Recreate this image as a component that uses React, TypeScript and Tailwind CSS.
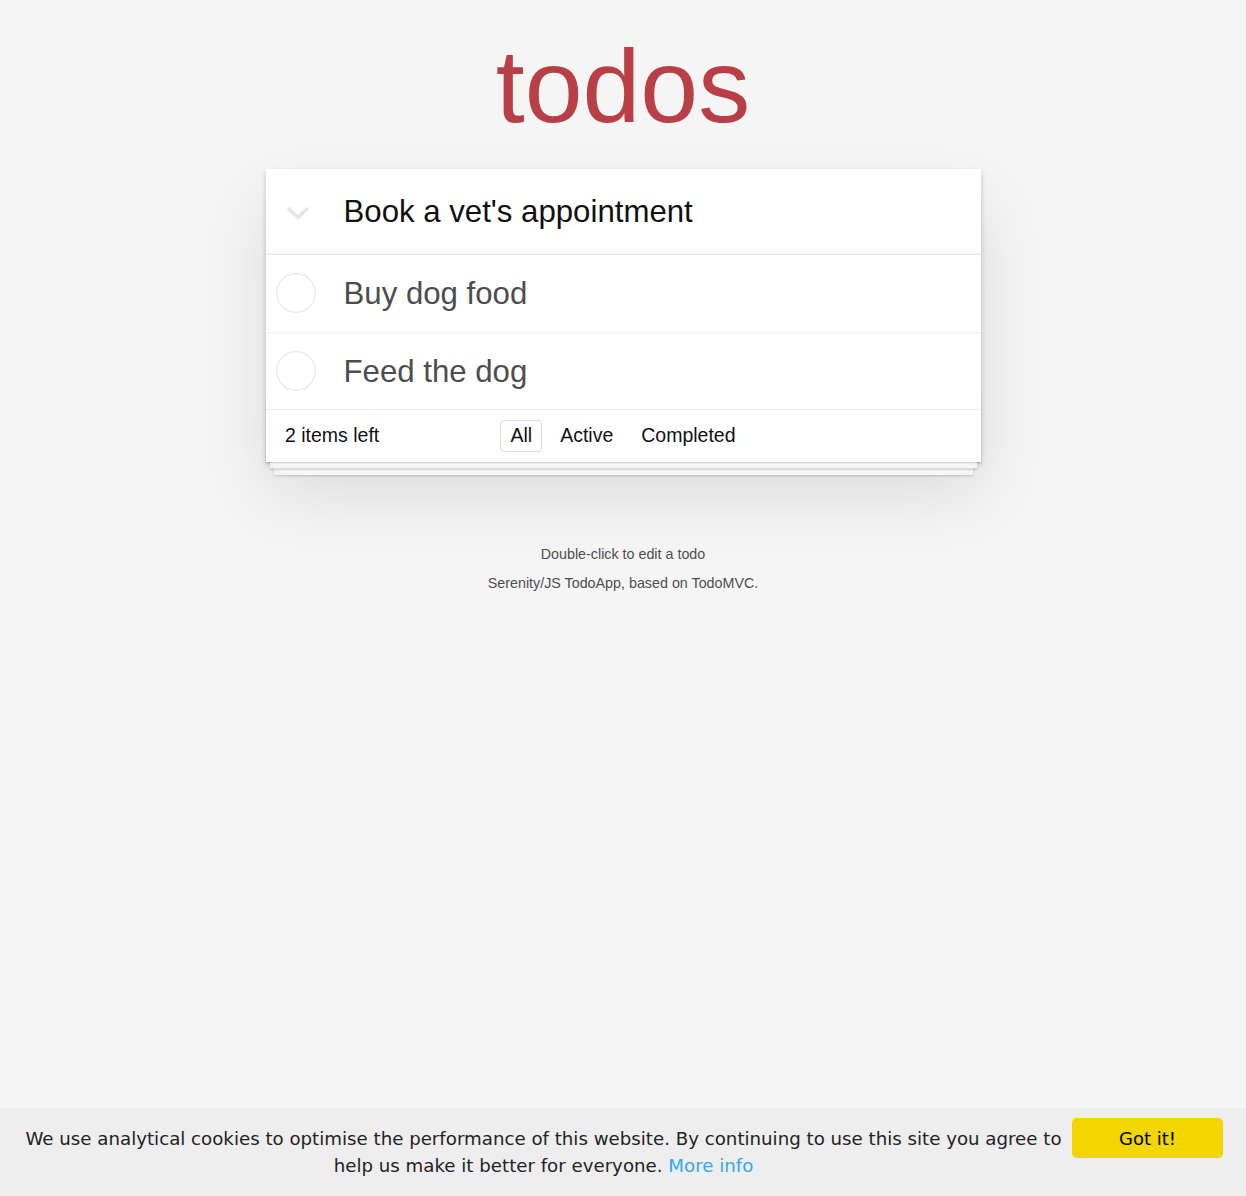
import React from "react";

const font = { fontFamily: '"Liberation Sans", Arial, Helvetica, sans-serif' };

function Circle() {
  return (
    <svg width="40" height="40" viewBox="0 0 40 40" className="shrink-0">
      <circle cx="20" cy="20" r="19.3" fill="none" stroke="#e9e9e9" strokeWidth="1.3" />
    </svg>
  );
}

function Item({ text }: { text: string }) {
  return (
    <li className="flex items-center h-[77.7px] border-b border-[#ededed] pl-[10px]">
      <Circle />
      <span className="ml-[28px] text-[31.2px] leading-[37px] text-[#4d4d4d]">{text}</span>
    </li>
  );
}

export default function App() {
  return (
    <div className="min-h-screen flex flex-col bg-[#f5f5f5]" style={font}>
      <div className="w-[715px] mx-auto">
        <h1 className="pt-[34px] h-[169px] text-center text-[104px] leading-[104px] text-[#b83f45] font-normal">
          todos
        </h1>
        <section className="relative bg-white shadow-[0_2.6px_5.2px_0_rgba(0,0,0,0.2),0_32.5px_65px_0_rgba(0,0,0,0.1)]">
          <div className="flex items-center h-[85px] shadow-[inset_0_-2px_1px_rgba(0,0,0,0.03)]">
            <div className="w-[78px] pl-[20px] pt-[2px] flex justify-start">
              <svg width="24" height="16" viewBox="0 0 24 16">
                <polyline points="2,3 12,12.5 22,3" fill="none" stroke="#e6e6e6" strokeWidth="3.6" />
              </svg>
            </div>
            <span className="text-[31.2px] leading-[37px] text-[#111111]">Book a vet's appointment</span>
          </div>
          <ul className="border-t border-[#e6e6e6]">
            <Item text="Buy dog food" />
            <Item text="Feed the dog" />
          </ul>
          <footer className="relative h-[52px] px-[19.5px] grid grid-cols-[1fr_auto_1fr] items-center text-[19.5px] text-[#111111]">
            <div className="absolute inset-x-0 bottom-0 h-[65px] shadow-[0_1.3px_1.3px_rgba(0,0,0,0.2),0_10.4px_0_-3.9px_#f6f6f6,0_11.7px_1.3px_-3.9px_rgba(0,0,0,0.2),0_20.8px_0_-7.8px_#f6f6f6,0_22.1px_2.6px_-7.8px_rgba(0,0,0,0.2)]" />
            <span className="relative -mt-[1px]">2 items left</span>
            <ul className="relative flex gap-[8px] -mt-[1px]">
              <li className="px-[9px] h-[32px] flex items-center border border-[#efd6d6] rounded-[4px]">All</li>
              <li className="px-[9px] h-[32px] flex items-center border border-transparent">Active</li>
              <li className="px-[9px] h-[32px] flex items-center border border-transparent">Completed</li>
            </ul>
            <span />
          </footer>
        </section>
        <div className="mt-[85px] text-center text-[14.3px] leading-[14.3px] text-[#4d4d4d] [text-shadow:0_1px_0_rgba(255,255,255,0.5)]">
          <p>Double-click to edit a todo</p>
          <p className="mt-[14px]">Serenity/JS TodoApp, based on TodoMVC.</p>
        </div>
      </div>
      <div
        className="mt-auto h-[88px] bg-[#eeeeee] flex items-start py-[10px] pl-[23px] pr-[23px] gap-[8px]"
        style={{ fontFamily: '"DejaVu Sans", Verdana, sans-serif' }}
      >
        <p className="flex-1 text-center text-[18.2px] leading-[27px] text-[#232323] pt-[7px]">
          We use analytical cookies to optimise the performance of this website. By continuing to use this site you agree to help us make it better for everyone.{" "}
          <span className="text-[#31a8f0]">More info</span>
        </p>
        <button className="w-[151px] h-[40px] bg-[#f1d600] rounded-[5px] text-[18px] text-black shrink-0">Got it!</button>
      </div>
    </div>
  );
}
